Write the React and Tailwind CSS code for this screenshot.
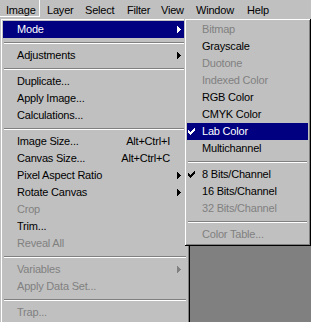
import React from 'react';

const font = { fontFamily: '"Liberation Sans", Arial, sans-serif' };

const menuBar = [
  { label: 'Image', w: 'w-[40px]', pl: 'pl-[6px]', open: true },
  { label: 'Layer', w: 'w-[39px]', pl: 'pl-[7px]' },
  { label: 'Select', w: 'w-[42px]', pl: 'pl-[6px]' },
  { label: 'Filter', w: 'w-[34px]', pl: 'pl-[6px]' },
  { label: 'View', w: 'w-[35px]', pl: 'pl-[6px]' },
  { label: 'Window', w: 'w-[51px]', pl: 'pl-[6px]' },
  { label: 'Help', w: 'w-[40px]', pl: 'pl-[6px]' },
];

const imageItems = [
  { label: 'Mode', sub: true, active: true },
  'sep',
  { label: 'Adjustments', sub: true },
  'sep',
  { label: 'Duplicate...' },
  { label: 'Apply Image...' },
  { label: 'Calculations...' },
  'sep',
  { label: 'Image Size...', keys: 'Alt+Ctrl+I' },
  { label: 'Canvas Size...', keys: 'Alt+Ctrl+C' },
  { label: 'Pixel Aspect Ratio', sub: true },
  { label: 'Rotate Canvas', sub: true },
  { label: 'Crop', disabled: true },
  { label: 'Trim...' },
  { label: 'Reveal All', disabled: true },
  'sep',
  { label: 'Variables', sub: true, disabled: true },
  { label: 'Apply Data Set...', disabled: true },
  'sep',
  { label: 'Trap...', disabled: true },
];

const modeItems = [
  { label: 'Bitmap', disabled: true },
  { label: 'Grayscale' },
  { label: 'Duotone', disabled: true },
  { label: 'Indexed Color', disabled: true },
  { label: 'RGB Color' },
  { label: 'CMYK Color' },
  { label: 'Lab Color', checked: true, active: true },
  { label: 'Multichannel' },
  'sep',
  { label: '8 Bits/Channel', checked: true },
  { label: '16 Bits/Channel' },
  { label: '32 Bits/Channel', disabled: true },
  'sep',
  { label: 'Color Table...', disabled: true },
];

// classic raised 3D frame: face / white on top-left, black / gray on bottom-right
const frame =
  'shadow-[inset_1px_1px_0_0_#c0c0c0,inset_-1px_-1px_0_0_#000000,inset_2px_2px_0_0_#ffffff,inset_-2px_-2px_0_0_#808080] p-[3px]';

const Arrow = ({ color }) => (
  <svg width="4" height="7" viewBox="0 0 4 7" shapeRendering="crispEdges" className="block">
    {[1, 2, 3, 4, 3, 2, 1].map((w, i) => (
      <rect key={i} x="0" y={i} width={w} height="1" fill={color} />
    ))}
  </svg>
);

const Check = ({ color }) => {
  const rows = [[6, 1], [5, 2], [0, 1, 4, 3], [0, 2, 3, 3], [0, 5], [1, 3], [2, 1]];
  return (
    <svg width="7" height="7" viewBox="0 0 7 7" shapeRendering="crispEdges" className="block">
      {rows.map((r, y) => {
        const rects = [];
        for (let k = 0; k < r.length; k += 2) {
          rects.push(<rect key={`${y}-${k}`} x={r[k]} y={y} width={r[k + 1]} height="1" fill={color} />);
        }
        return rects;
      })}
    </svg>
  );
};

const Separator = () => (
  <div className="h-[9px] px-[1px] pt-[4px]">
    <div className="h-[1px] bg-[#808080]" />
    <div className="h-[1px] bg-white" />
  </div>
);

const textColor = (item) =>
  item.active ? 'text-white' : item.disabled ? 'text-[#808080]' : 'text-black';

const arrowColor = (item) => (item.active ? '#ffffff' : item.disabled ? '#808080' : '#000000');

const App = () => {
  return (
    <div
      className="relative w-[311px] h-[322px] overflow-hidden bg-[#808080] text-[11px] tracking-[-0.2px] select-none"
      style={font}
    >
      {/* Menu bar */}
      <div className="flex h-[18px] bg-[#c0c0c0]">
        {menuBar.map((m) => (
          <div
            key={m.label}
            className={`${m.w} ${m.pl} h-[17px] leading-[20px] text-black ${
              m.open ? 'shadow-[inset_-1px_-1px_0_0_#ffffff]' : ''
            }`}
          >
            {m.label}
          </div>
        ))}
        <div className="flex-1" />
      </div>

      {/* Image menu */}
      <div className={`absolute left-0 top-[18px] w-[190px] bg-[#c0c0c0] ${frame}`}>
        {imageItems.map((item, i) =>
          item === 'sep' ? (
            <Separator key={i} />
          ) : (
            <div
              key={i}
              className={`flex items-center h-[17px] leading-[17px] pl-[14px] pr-[6px] ${
                item.active ? 'bg-[#000080]' : ''
              } ${textColor(item)}`}
            >
              <span className="flex-1 whitespace-nowrap">{item.label}</span>
              {item.keys && <span className="mr-[7px] whitespace-nowrap">{item.keys}</span>}
              <span className="w-[4px]">{item.sub && <Arrow color={arrowColor(item)} />}</span>
            </div>
          )
        )}
      </div>

      {/* Mode submenu */}
      <div className={`absolute left-[184px] top-[18px] w-[127px] bg-[#c0c0c0] ${frame}`}>
        {modeItems.map((item, i) =>
          item === 'sep' ? (
            <Separator key={i} />
          ) : (
            <div
              key={i}
              className={`flex items-center h-[17px] leading-[17px] ${
                item.active ? 'bg-[#000080]' : ''
              } ${textColor(item)}`}
            >
              <span className="w-[15px] pl-[1px] flex items-center">
                {item.checked && <Check color={item.active ? '#ffffff' : '#000000'} />}
              </span>
              <span className="whitespace-nowrap">{item.label}</span>
            </div>
          )
        )}
      </div>
    </div>
  );
};

export default App;
